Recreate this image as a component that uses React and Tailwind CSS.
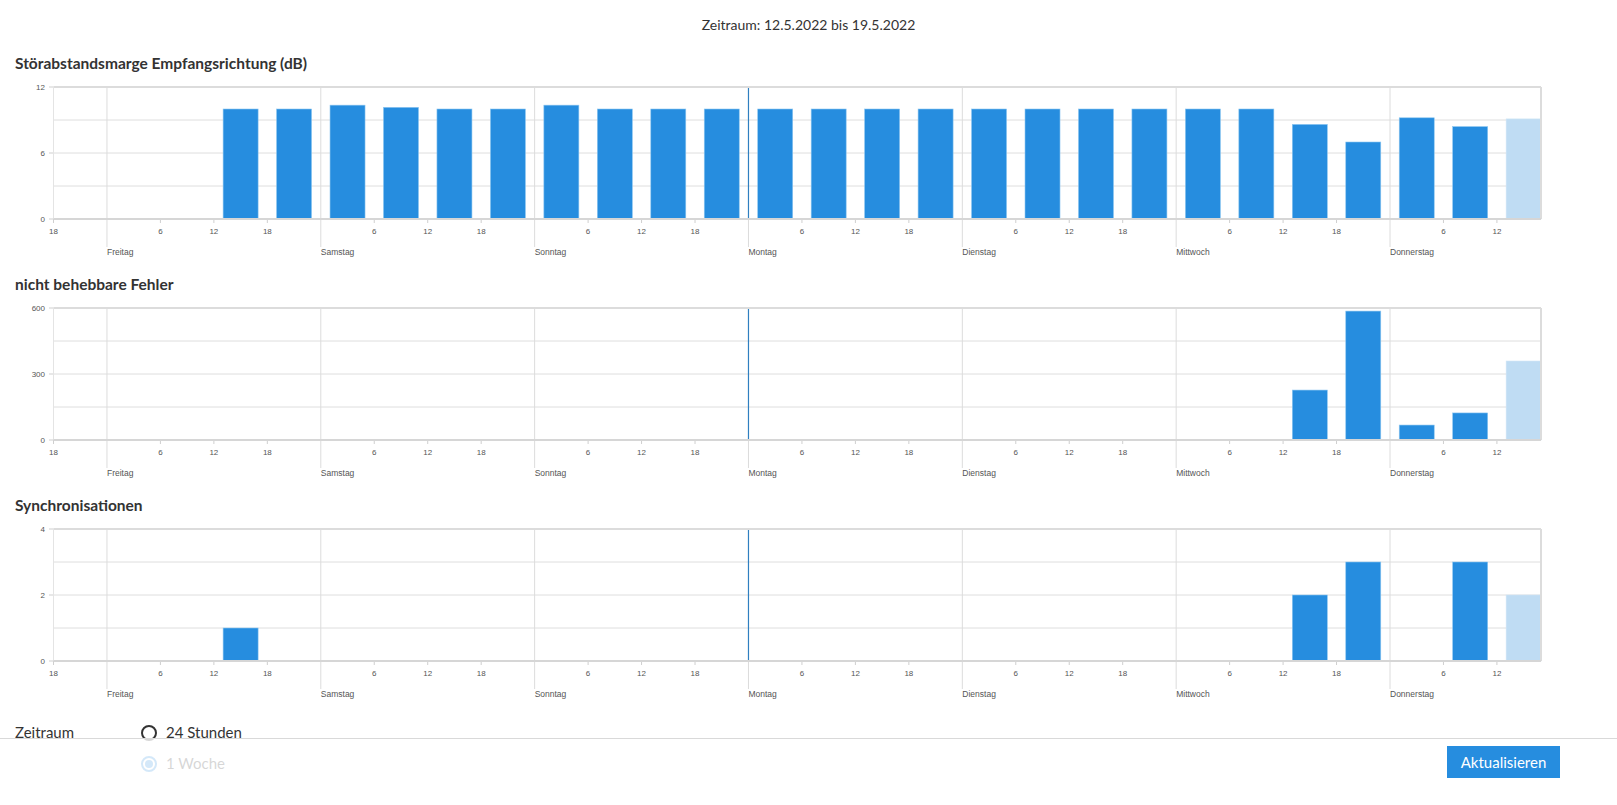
import React from 'react';

const X0 = 53.5;
const PX_PER_HOUR = 8.91;
const PLOT_RIGHT = 1541;
const PLOT_TOP = 11;
const PLOT_H = 132;
const BAR_W = 35;
const DAYS = ['Freitag', 'Samstag', 'Sonntag', 'Montag', 'Dienstag', 'Mittwoch', 'Donnerstag'];

// bucket i starts at Friday 12:00 (18h after the left edge), 6h per bucket
const toBars = (values) =>
  values.map((v, i) => ({ start: 18 + 6 * i, v, light: i === values.length - 1 }));

const charts = [
  {
    title: 'Störabstandsmarge Empfangsrichtung (dB)',
    max: 12,
    bars: toBars([10, 10, 10.35, 10.15, 10, 10, 10.35, 10, 10, 10, 10, 10, 10, 10, 10, 10, 10, 10, 10, 10, 8.6, 7, 9.2, 8.4, 9.1]),
  },
  {
    title: 'nicht behebbare Fehler',
    max: 600,
    bars: toBars([0, 0, 0, 0, 0, 0, 0, 0, 0, 0, 0, 0, 0, 0, 0, 0, 0, 0, 0, 0, 227, 586, 68, 123, 359]),
  },
  {
    title: 'Synchronisationen',
    max: 4,
    bars: toBars([1, 0, 0, 0, 0, 0, 0, 0, 0, 0, 0, 0, 0, 0, 0, 0, 0, 0, 0, 0, 2, 3, 0, 3, 2]),
  },
];

const BarChart = ({ max, bars }) => {
  const bottom = PLOT_TOP + PLOT_H;
  const ticks = [];
  for (let h = 0; X0 + h * PX_PER_HOUR <= PLOT_RIGHT; h += 6) ticks.push(h);

  return (
    <svg width="1560" height="197" className="block">
      {/* horizontal grid */}
      {[1, 2, 3].map((k) => (
        <line key={k} x1={X0} x2={PLOT_RIGHT} y1={PLOT_TOP + (PLOT_H / 4) * k} y2={PLOT_TOP + (PLOT_H / 4) * k} stroke="#dedede" strokeWidth="1" />
      ))}

      {/* ticks + day lines */}
      {ticks.map((h) => {
        const x = X0 + h * PX_PER_HOUR;
        const hourOfDay = (18 + h) % 24;
        if (hourOfDay === 0) {
          const day = DAYS[(h - 6) / 24];
          return (
            <g key={h}>
              <line x1={x} x2={x} y1={PLOT_TOP} y2={171} stroke="#dcdcdc" strokeWidth="1" />
              <text x={x} y={179} fontSize="8.5" fill="#555" fontFamily="'Liberation Sans', Arial, sans-serif">{day}</text>
            </g>
          );
        }
        return (
          <g key={h}>
            <line x1={x} x2={x} y1={bottom} y2={bottom + 4} stroke="#cfcfcf" strokeWidth="1" />
            <text x={x} y={158} fontSize="8" textAnchor="middle" fill="#555" fontFamily="'Liberation Sans', Arial, sans-serif">{hourOfDay}</text>
          </g>
        );
      })}

      {/* y axis labels */}
      {[max, max / 2, 0].map((v, i) => {
        const y = PLOT_TOP + (PLOT_H / 2) * i;
        return (
          <g key={v}>
            <line x1={49} x2={X0} y1={y} y2={y} stroke="#cfcfcf" strokeWidth="1" />
            <text x={45} y={y + 3} fontSize="8" textAnchor="end" fill="#555" fontFamily="'Liberation Sans', Arial, sans-serif">{v}</text>
          </g>
        );
      })}

      {/* bars */}
      {bars.filter((b) => b.v > 0).map((b) => {
        const cx = X0 + (b.start + 3) * PX_PER_HOUR;
        const hgt = (b.v / max) * PLOT_H;
        return (
          <rect
            key={b.start}
            x={cx - BAR_W / 2}
            y={bottom - hgt}
            width={BAR_W}
            height={hgt}
            fill={b.light ? '#bfdcf3' : '#268ddf'}
            stroke={b.light ? '#cfe5f6' : '#8cc6f0'}
            strokeWidth="0.6"
          />
        );
      })}

      {/* current week start marker */}
      <line x1={X0 + 78 * PX_PER_HOUR} x2={X0 + 78 * PX_PER_HOUR} y1={PLOT_TOP} y2={bottom} stroke="#2f7fc0" strokeWidth="1.2" />

      {/* frame */}
      <line x1={X0} x2={PLOT_RIGHT} y1={PLOT_TOP} y2={PLOT_TOP} stroke="#dcdcdc" strokeWidth="2" />
      <line x1={PLOT_RIGHT} x2={PLOT_RIGHT} y1={PLOT_TOP} y2={bottom} stroke="#dcdcdc" strokeWidth="2" />
      <line x1={X0} x2={X0} y1={PLOT_TOP} y2={bottom} stroke="#e4e4e4" strokeWidth="1" />
      <line x1={X0} x2={PLOT_RIGHT} y1={bottom} y2={bottom} stroke="#d6d6d6" strokeWidth="2" />
    </svg>
  );
};

const Radio = ({ checked, label }) => (
  <label className="flex items-center gap-[9px] h-[31px]">
    <span className={`w-[16px] h-[16px] rounded-full border-2 flex items-center justify-center ${checked ? 'border-[#268ddf]' : 'border-[#333]'}`}>
      {checked && <span className="w-[8px] h-[8px] rounded-full bg-[#268ddf]" />}
    </span>
    <span className="text-[15px] text-[#333]">{label}</span>
  </label>
);

const App = () => {
  return (
    <div className="relative h-screen overflow-hidden bg-white text-[#333]" style={{ fontFamily: "Lato, 'Noto Sans', sans-serif" }}>
      <div className="h-[52px] flex items-center justify-center text-[14px] text-[#333] pb-[4px]">
        Zeitraum: 12.5.2022 bis 19.5.2022
      </div>

      {charts.map((c) => (
        <section key={c.title} className="h-[221px]">
          <h2 className="h-[24px] flex items-center pl-[15px] text-[15.5px] font-bold text-[#333]">{c.title}</h2>
          <BarChart max={c.max} bars={c.bars} />
        </section>
      ))}

      <div className="flex pt-[2px]">
        <div className="w-[141px] pl-[15px] h-[31px] flex items-center text-[15px] text-[#333]">Zeitraum</div>
        <div className="flex flex-col">
          <Radio label="24 Stunden" />
          <Radio checked label="1 Woche" />
        </div>
      </div>

      <footer className="absolute left-0 right-0 bottom-0 h-[67px] border-t border-[#d9d9d9] bg-white/80 flex justify-end items-start pt-[7px] pr-[57px]">
        <button className="h-[32px] w-[113px] bg-[#268ddf] text-white text-[15px]">Aktualisieren</button>
      </footer>
    </div>
  );
};

export default App;
